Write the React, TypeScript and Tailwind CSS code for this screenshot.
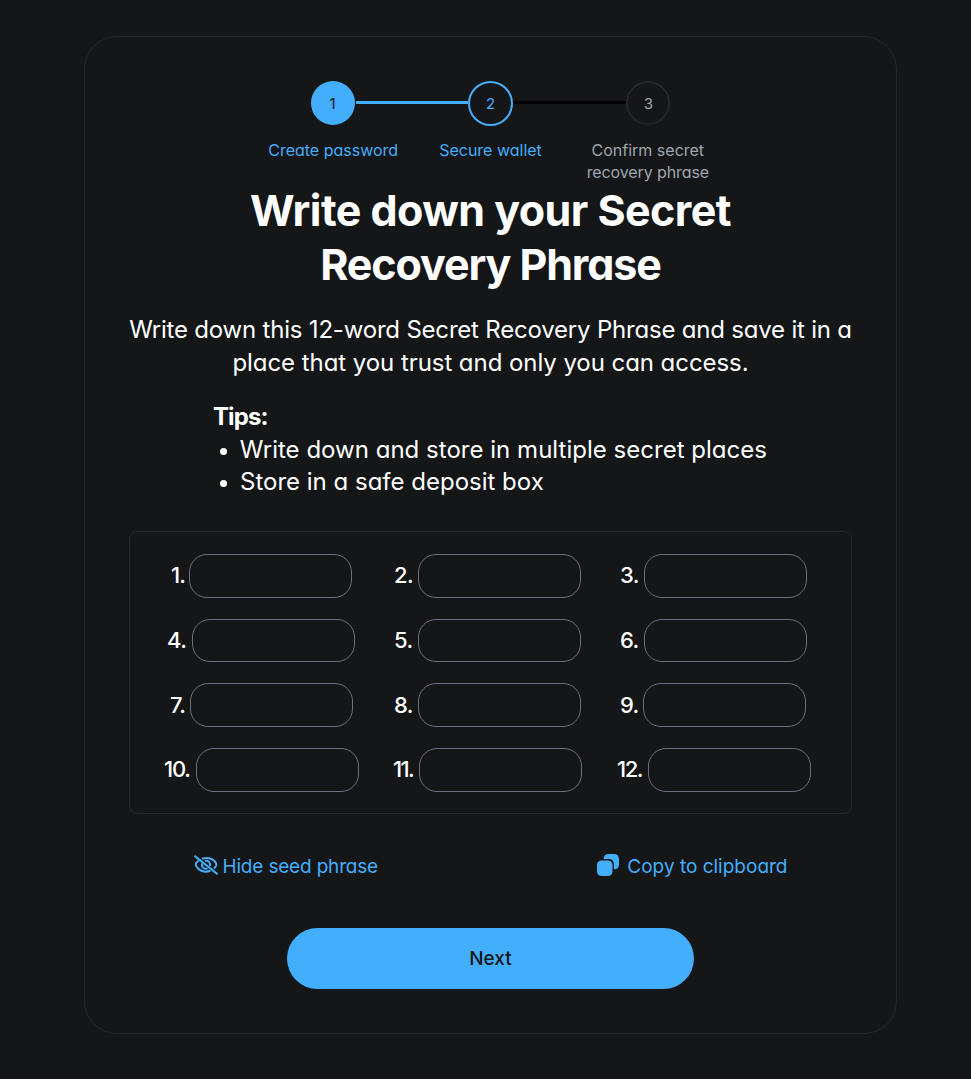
const font =
  "font-['Inter','Liberation_Sans',sans-serif] [font-feature-settings:'cv11'_1]";

const line = "whitespace-nowrap";

type WordSlot = { n: number; label: string; inset: string };

const words: WordSlot[] = [
  { n: 1, label: "w-[18px] tracking-[-0.9px]", inset: "pl-[41px]" },
  { n: 2, label: "w-[24px] tracking-[-0.6px]", inset: "pl-[38px]" },
  { n: 3, label: "w-[24px] tracking-[-0.6px]", inset: "pl-[38px]" },
  { n: 4, label: "w-[25px] tracking-[-0.5px]", inset: "pl-[37px]" },
  { n: 5, label: "w-[24px] tracking-[-0.6px]", inset: "pl-[38px]" },
  { n: 6, label: "w-[24px] tracking-[-0.6px]", inset: "pl-[38px]" },
  { n: 7, label: "w-[20px] tracking-[-0.7px]", inset: "pl-[40px]" },
  { n: 8, label: "w-[24px] tracking-[-0.6px]", inset: "pl-[38px]" },
  { n: 9, label: "w-[23px] tracking-[-0.8px]", inset: "pl-[38px]" },
  { n: 10, label: "w-[32px] tracking-[-1.2px]", inset: "pl-[34px]" },
  { n: 11, label: "w-[26px] tracking-[-1.7px]", inset: "pl-[37px]" },
  { n: 12, label: "w-[31px] tracking-[-1.5px]", inset: "pl-[35px]" },
];

function Word({ n, label, inset }: WordSlot) {
  return (
    <div className={`flex h-[43.5px] items-center ${inset}`}>
      <span className={`shrink-0 ${line} text-[22px] font-medium ${label}`}>
        {n}.
      </span>
      <div className="h-full w-[163px] shrink-0 rounded-[18px] border border-[#6a737d]" />
    </div>
  );
}

export default function App() {
  return (
    <main
      className={`flex h-[1079px] w-[971px] justify-center bg-[#141618] pl-[10px] pt-[36px] text-white ${font}`}
    >
      <section className="flex h-[998px] w-[813px] flex-col items-center rounded-[33px] border border-[#24272a] pt-[43.500px]">
        <div className="flex h-[102px] w-[472px] text-[16px] leading-[22px]">
          <div className="flex w-1/3 flex-col items-center text-[#43aefc]">
            <div className="flex h-[44px] w-full items-center">
              <div className="w-[56px] shrink-0" />
              <div className="flex size-[44px] shrink-0 items-center justify-center rounded-full bg-[#43aefc] pt-[2px] text-[15px] text-[#141618]">
                1
              </div>
              <div className="mb-px ml-px h-[3px] flex-1 bg-[#43aefc]" />
            </div>
            <p className={`mt-[14.500px] ${line}`}>Create password</p>
          </div>
          <div className="flex w-1/3 flex-col items-center text-[#43aefc]">
            <div className="flex h-[44px] w-full items-center">
              <div className="mb-px h-[3px] flex-1 bg-[#43aefc]" />
              <div className="mt-px flex size-[45px] shrink-0 items-center justify-center rounded-full border-2 border-[#43aefc] pt-px text-[15px]">
                2
              </div>
              <div className="mb-px h-[3px] flex-1 bg-black" />
            </div>
            <p className={`mt-[14.500px] ${line}`}>Secure wallet</p>
          </div>
          <div className="flex w-1/3 flex-col items-center text-center text-[#9fa6ae]">
            <div className="flex h-[44px] w-full items-center">
              <div className="mb-px h-[3px] flex-1 bg-black" />
              <div className="flex size-[44px] shrink-0 items-center justify-center rounded-full border-2 border-[#24272a] pt-[2px] text-[15px]">
                3
              </div>
              <div className="w-[56px] shrink-0" />
            </div>
            <p className={`mt-[14.500px] ${line}`}>Confirm secret</p>
            <p className={`${line} tracking-[-0.1px]`}>recovery phrase</p>
          </div>
        </div>

        <h1 className="flex flex-col items-center text-[43px] font-bold leading-[54px]">
          <span className={`${line} tracking-[-0.54px]`}>Write down your Secret</span>
          <span className={`${line} tracking-[-1.1px]`}>Recovery Phrase</span>
        </h1>

        <div className="mt-[22.500px] flex flex-col items-center text-[24px] leading-[33px]">
          <p className={`${line} tracking-[-0.2px]`}>
            Write down this 12-word Secret Recovery Phrase and save it in a
          </p>
          <p className={`${line} tracking-[-0.06px]`}>
            place that you trust and only you can access.
          </p>
        </div>

        <div className="mt-[22px] w-[553px] text-[24px] leading-[32.500px]">
          <p className="-ml-px w-fit font-bold tracking-[-0.9px]">Tips:</p>
          <ul>
            <li className="flex items-center">
              <i className="ml-[6px] mr-[13px] mt-[3px] size-[7px] rounded-full bg-white" />
              <span className={`${line} tracking-[0.02px]`}>
                Write down and store in multiple secret places
              </span>
            </li>
            <li className="flex items-center">
              <i className="ml-[6px] mr-[13px] mt-[3px] size-[7px] rounded-full bg-white" />
              <span className={line}>Store in a safe deposit box</span>
            </li>
          </ul>
        </div>

        <div className="mt-[32.500px] grid h-[283px] w-[723px] shrink-0 grid-cols-[226px_226px_226px] content-start gap-y-[21.200px] rounded-[8px] border border-[#24272a] pt-[22px]">
          {words.map((w) => (
            <Word key={w.n} {...w} />
          ))}
        </div>

        <div className="mt-[39px] flex h-[28px] w-[594px] shrink-0 justify-between text-[19px] leading-[28px] text-[#43aefc]">
          <div className="flex items-center">
            <svg
              viewBox="0 0 24 20"
              className="mb-[4px] mr-[5px] h-[20px] w-[24px]"
              fill="none"
              stroke="currentColor"
              strokeWidth="2"
            >
              <path d="M.5.8 23.500 19.200" />
              <path d="M8 3.800C14.500 1.600 20.500 4.200 22.200 8.600c.4 1 .1 2-.5 2.900-.5.8-1 1.400-1.800 2M4.600 5.400C3.500 6.300 2.700 7.300 2.100 8.300c-.5.900-.5 1.800 0 2.700 2.500 4.700 8.400 7 14.300 4.800" />
              <path d="M8.300 8.300a4 4 0 0 0 5.200 5.200M10.800 5.900a4.100 4.100 0 0 1 5.200 5" />
            </svg>
            <span className={`${line} tracking-[-0.18px]`}>Hide seed phrase</span>
          </div>
          <div className="flex items-center">
            <svg viewBox="0 0 22 22" className="mb-[4px] mr-[8.500px] size-[22px]" fill="currentColor">
              <rect x="0" y="6.500" width="15.500" height="15.500" rx="4.500" />
              <path d="M6.600 5.100C6.900 1.500 8.400 0 12 0h4.500C20.300 0 22 1.700 22 5.500V10c0 3.600-1.500 5.100-5.100 5.400V11.200c0-4.500-1.600-6.100-6.100-6.100Z" />
            </svg>
            <span className={line}>Copy to clipboard</span>
          </div>
        </div>

        <button className="mt-[47px] h-[61px] w-[407px] shrink-0 rounded-full bg-[#43aefc] pt-px text-[19px] font-medium text-[#141618]">
          Next
        </button>
      </section>
    </main>
  );
}
